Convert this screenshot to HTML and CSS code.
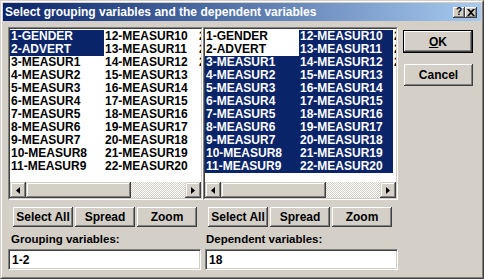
FILE: index.html
```html
<!DOCTYPE html>
<html lang="en">
<head>
    <meta charset="UTF-8">
    <meta name="viewport" content="width=device-width, initial-scale=1.0">
    <title>Select grouping variables</title>
    <link rel="stylesheet" href="styles.css">
</head>
<body>
    <div class="window">
        <div class="frame">
            <div class="titlebar">
                <span class="title">Select grouping variables and the dependent variables</span>
                <div class="title-buttons">
                    <span class="tbtn help">?</span>
                    <span class="tbtn close">
                        <svg width="8" height="7" viewBox="0 0 8 7"><path d="M0 0h2l2 2 2-2h2L5 3.5 8 7H6L4 5 2 7H0l3-3.5z" fill="#000"/></svg>
                    </span>
                </div>
            </div>

            <div class="content">
                <div class="panels">
                    <!-- grouping variables -->
                    <div class="panel">
                        <div class="listbox">
                            <div class="listbox-inner">
                                <div class="items">
                                    <div class="item sel">1-GENDER</div>
                                    <div class="item sel">2-ADVERT</div>
                                    <div class="item">3-MEASUR1</div>
                                    <div class="item">4-MEASUR2</div>
                                    <div class="item">5-MEASUR3</div>
                                    <div class="item">6-MEASUR4</div>
                                    <div class="item">7-MEASUR5</div>
                                    <div class="item">8-MEASUR6</div>
                                    <div class="item">9-MEASUR7</div>
                                    <div class="item">10-MEASUR8</div>
                                    <div class="item">11-MEASUR9</div>
                                    <div class="item">12-MEASUR10</div>
                                    <div class="item">13-MEASUR11</div>
                                    <div class="item">14-MEASUR12</div>
                                    <div class="item">15-MEASUR13</div>
                                    <div class="item">16-MEASUR14</div>
                                    <div class="item">17-MEASUR15</div>
                                    <div class="item">18-MEASUR16</div>
                                    <div class="item">19-MEASUR17</div>
                                    <div class="item">20-MEASUR18</div>
                                    <div class="item">21-MEASUR19</div>
                                    <div class="item">22-MEASUR20</div>
                                    <div class="item">23-MEASUR21</div>
                                    <div class="item">24-MEASUR22</div>
                                    <div class="item">25-MEASUR23</div>
                                </div>
                                <div class="hscroll">
                                    <span class="sbtn">
                                        <svg width="4" height="7" viewBox="0 0 4 7"><path d="M4 0v7L0 3.5z" fill="#000"/></svg>
                                    </span>
                                    <span class="thumb"></span>
                                    <span class="track"></span>
                                    <span class="sbtn">
                                        <svg width="4" height="7" viewBox="0 0 4 7"><path d="M0 0v7l4-3.5z" fill="#000"/></svg>
                                    </span>
                                </div>
                            </div>
                        </div>
                        <div class="btnrow">
                            <button class="btn">Select All</button>
                            <button class="btn">Spread</button>
                            <button class="btn">Zoom</button>
                        </div>
                        <label class="field-label" for="grouping">Grouping variables:</label>
                        <input class="field" id="grouping" type="text" value="1-2">
                    </div>

                    <!-- dependent variables -->
                    <div class="panel">
                        <div class="listbox">
                            <div class="listbox-inner">
                                <div class="items">
                                    <div class="item">1-GENDER</div>
                                    <div class="item">2-ADVERT</div>
                                    <div class="item sel">3-MEASUR1</div>
                                    <div class="item sel">4-MEASUR2</div>
                                    <div class="item sel">5-MEASUR3</div>
                                    <div class="item sel">6-MEASUR4</div>
                                    <div class="item sel">7-MEASUR5</div>
                                    <div class="item sel">8-MEASUR6</div>
                                    <div class="item sel">9-MEASUR7</div>
                                    <div class="item sel">10-MEASUR8</div>
                                    <div class="item sel">11-MEASUR9</div>
                                    <div class="item sel">12-MEASUR10</div>
                                    <div class="item sel">13-MEASUR11</div>
                                    <div class="item sel">14-MEASUR12</div>
                                    <div class="item sel">15-MEASUR13</div>
                                    <div class="item sel">16-MEASUR14</div>
                                    <div class="item sel">17-MEASUR15</div>
                                    <div class="item sel">18-MEASUR16</div>
                                    <div class="item sel">19-MEASUR17</div>
                                    <div class="item sel">20-MEASUR18</div>
                                    <div class="item sel">21-MEASUR19</div>
                                    <div class="item sel">22-MEASUR20</div>
                                    <div class="item">23-MEASUR21</div>
                                    <div class="item">24-MEASUR22</div>
                                    <div class="item">25-MEASUR23</div>
                                </div>
                                <div class="hscroll">
                                    <span class="sbtn">
                                        <svg width="4" height="7" viewBox="0 0 4 7"><path d="M4 0v7L0 3.5z" fill="#000"/></svg>
                                    </span>
                                    <span class="thumb"></span>
                                    <span class="track"></span>
                                    <span class="sbtn">
                                        <svg width="4" height="7" viewBox="0 0 4 7"><path d="M0 0v7l4-3.5z" fill="#000"/></svg>
                                    </span>
                                </div>
                            </div>
                        </div>
                        <div class="btnrow">
                            <button class="btn">Select All</button>
                            <button class="btn">Spread</button>
                            <button class="btn">Zoom</button>
                        </div>
                        <label class="field-label" for="dependent">Dependent variables:</label>
                        <input class="field" id="dependent" type="text" value="18">
                    </div>
                </div>

                <div class="side">
                    <button class="btn big default"><u>O</u>K</button>
                    <button class="btn big">Cancel</button>
                </div>
            </div>
        </div>
    </div>
</body>
</html>
```

FILE: styles.css
```css
* {
    box-sizing: border-box;
}

body {
    margin: 0;
    background: #d4d0c8;
    font-family: "Liberation Sans", Arial, sans-serif;
    font-weight: bold;
    font-size: 12px;
    color: #000;
}

.window {
    width: 484px;
    height: 279px;
    border: 1px solid;
    border-color: #d4d0c8 #404040 #404040 #d4d0c8;
}

.frame {
    height: 100%;
    border: 1px solid;
    border-color: #fff #808080 #808080 #fff;
    padding: 1px;
}

/* title bar */
.titlebar {
    height: 18px;
    display: flex;
    align-items: center;
    justify-content: space-between;
    padding: 0 4px 0 2px;
    background: linear-gradient(to right, #0a246a, #a6caf0);
}

.title {
    color: #fff;
    font-size: 12px;
}

.title-buttons {
    display: flex;
}

.tbtn {
    width: 12px;
    height: 11px;
    display: flex;
    align-items: center;
    justify-content: center;
    background: #d4d0c8;
    font-size: 10px;
    line-height: 1;
    box-shadow: inset -1px -1px #404040, inset 1px 1px #fff, inset -2px -2px #808080;
}

/* dialog body */
.content {
    display: flex;
    padding: 6px 0 0 5px;
}

.panels {
    display: grid;
    grid-template-columns: 195px 195px;
}

.panel {
    display: flex;
    flex-direction: column;
}

.listbox {
    height: 173px;
    border: 1px solid;
    border-color: #808080 #fff #fff #808080;
}

.listbox-inner {
    height: 100%;
    display: flex;
    flex-direction: column;
    background: #fff;
    border: 1px solid;
    border-color: #404040 #d4d0c8 #d4d0c8 #404040;
}

/* third column is only a sliver: the rest is scrolled out of view */
.items {
    flex: 1;
    padding-top: 1px;
    display: grid;
    grid-auto-flow: column;
    grid-template-rows: repeat(11, 13px);
    grid-template-columns: 94px 94px 3px;
    overflow: hidden;
}

.item {
    line-height: 13px;
    padding-left: 1px;
    white-space: nowrap;
    overflow: hidden;
}

.item.sel {
    background: #0a246a;
    color: #fff;
}

/* horizontal scrollbar */
.hscroll {
    height: 16px;
    display: flex;
}

.sbtn,
.thumb {
    background: #d4d0c8;
    box-shadow: inset -1px -1px #404040, inset 1px 1px #d4d0c8, inset -2px -2px #808080, inset 2px 2px #fff;
}

.sbtn {
    width: 16px;
    display: flex;
    align-items: center;
    justify-content: center;
}

.thumb {
    width: 105px;
}

.track {
    flex: 1;
    background: repeating-conic-gradient(#fff 0 25%, #d4d0c8 0 50%) 0 0 / 2px 2px;
}

/* buttons */
.btn {
    font-family: inherit;
    font-weight: bold;
    font-size: 12px;
    color: #000;
    background: #d4d0c8;
    border: none;
    padding: 0;
    box-shadow: inset -1px -1px #404040, inset 1px 1px #fff, inset -2px -2px #808080;
}

.btnrow {
    display: flex;
    gap: 2px;
    margin-top: 7px;
    padding-left: 5px;
}

.btnrow .btn {
    width: 60px;
    height: 20px;
}

.field-label {
    margin-top: 5px;
    padding-left: 3px;
    line-height: 14px;
    font-size: 11.5px;
}

.field {
    margin-top: 3px;
    width: 193px;
    height: 21px;
    font-family: inherit;
    font-weight: bold;
    font-size: 12px;
    padding: 0 0 0 3px;
    background: #fff;
    border: 1px solid;
    border-color: #808080 #fff #fff #808080;
    box-shadow: inset 1px 1px #404040, inset -1px -1px #d4d0c8;
    outline: none;
}

.panel + .panel .field {
    margin-left: 2px;
}

.side {
    display: flex;
    flex-direction: column;
    margin-left: 5px;
    padding-top: 3px;
}

.btn.big {
    width: 70px;
    height: 23px;
}

.btn.big + .btn.big {
    margin-top: 11px;
    margin-left: 1px;
    width: 69px;
    height: 22px;
}

.btn.default {
    border: 1px solid #000;
}
```
